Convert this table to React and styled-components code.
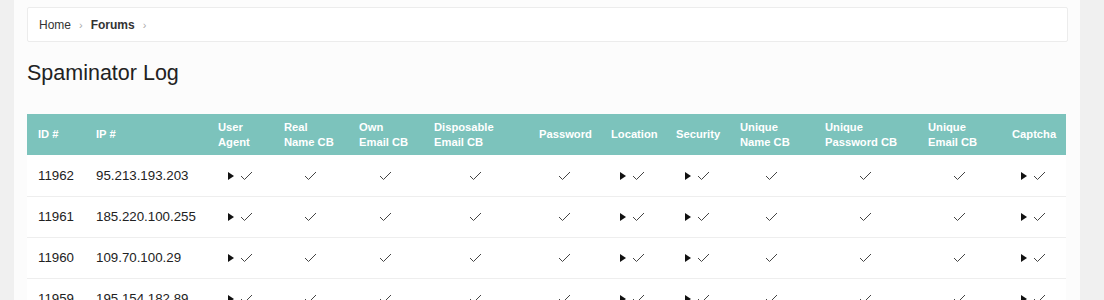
import React from "react";
import styled, { createGlobalStyle } from "styled-components";

const Global = createGlobalStyle`
  html, body { margin: 0; padding: 0; background: #f0f0f0; }
  body { font-family: "Liberation Sans", Arial, sans-serif; color: #222; }
`;

const Shell = styled.div`
  display: flex;
  align-items: flex-start;
  height: 300px;
  overflow: hidden;
  padding-left: 14px;
`;

const Main = styled.main`
  flex: none;
  width: 1066px;
  min-height: 300px;
  background: #fcfcfc;
  padding: 7px 12px 0 13px;
  box-sizing: border-box;
`;

const Crumbs = styled.nav`
  height: 35px;
  box-sizing: border-box;
  background: #fff;
  border: 1px solid #ececec;
  border-radius: 2px;
  display: flex;
  align-items: center;
  gap: 8px;
  padding: 0 11px;
  font-size: 12px;
  color: #333;
`;

const Crumb = styled.span`
  font-weight: ${(p) => (p.$strong ? 700 : 400)};
`;

const Sep = styled.span`
  color: #aaa;
  font-size: 11px;
`;

const Title = styled.h1`
  margin: 19px 0 0;
  font-size: 21.5px;
  font-weight: 400;
  color: #222;
  line-height: 25px;
`;

const Table = styled.table`
  margin-top: 28px;
  width: 1039px;
  border-collapse: collapse;
  table-layout: fixed;
  background: #fff;
`;

const Th = styled.th`
  background: #7cc3bc;
  color: #fff;
  font-size: 11.2px;
  font-weight: 700;
  text-align: left;
  padding: 0 11px;
  height: 41px;
  line-height: 15px;
  vertical-align: middle;
`;

const Td = styled.td`
  height: 41px;
  box-sizing: border-box;
  border-bottom: 1px solid #eee;
  font-size: 13.3px;
  padding: 0 11px;
  text-align: ${(p) => (p.$center ? "center" : "left")};
  vertical-align: middle;
  color: #222;
`;

const Flag = styled.span`
  display: inline-flex;
  align-items: center;
  gap: 6px;
  vertical-align: middle;
`;

const Tri = styled.span`
  width: 0;
  height: 0;
  border-top: 4px solid transparent;
  border-bottom: 4px solid transparent;
  border-left: 6px solid #111;
`;

const Check = () => (
  <svg width="13" height="10" viewBox="0 0 13 10" style={{ display: "block" }}>
    <polyline points="1,5 4.5,8.5 12,1" fill="none" stroke="#444" strokeWidth="1" />
  </svg>
);

const cols = [
  ["ID #", 58],
  ["IP #", 122],
  [["User", "Agent"], 66],
  [["Real", "Name CB"], 75],
  [["Own", "Email CB"], 75],
  [["Disposable", "Email CB"], 105],
  ["Password", 72],
  ["Location", 65],
  ["Security", 64],
  [["Unique", "Name CB"], 85],
  [["Unique", "Password CB"], 103],
  [["Unique", "Email CB"], 84],
  ["Captcha", 65],
];

// true = triangle + check, false = check only
const flags = [true, false, false, false, false, true, true, false, false, false, true];

const rows = [
  ["11962", "95.213.193.203"],
  ["11961", "185.220.100.255"],
  ["11960", "109.70.100.29"],
  ["11959", "195.154.182.89"],
];

export default function App() {
  return (
    <>
      <Global />
      <Shell>
        <Main>
          <Crumbs>
            <Crumb>Home</Crumb>
            <Sep>›</Sep>
            <Crumb $strong>Forums</Crumb>
            <Sep>›</Sep>
          </Crumbs>
          <Title>Spaminator Log</Title>
          <Table>
            <colgroup>
              {cols.map(([, w], i) => (
                <col key={i} style={{ width: w }} />
              ))}
            </colgroup>
            <thead>
              <tr>
                {cols.map(([h], i) => (
                  <Th key={i}>
                    {Array.isArray(h) ? (
                      <>
                        {h[0]}
                        <br />
                        {h[1]}
                      </>
                    ) : (
                      h
                    )}
                  </Th>
                ))}
              </tr>
            </thead>
            <tbody>
              {rows.map(([id, ip]) => (
                <tr key={id}>
                  <Td>{id}</Td>
                  <Td>{ip}</Td>
                  {flags.map((f, i) => (
                    <Td key={i} $center>
                      <Flag>
                        {f && <Tri />}
                        <Check />
                      </Flag>
                    </Td>
                  ))}
                </tr>
              ))}
            </tbody>
          </Table>
        </Main>
      </Shell>
    </>
  );
}
